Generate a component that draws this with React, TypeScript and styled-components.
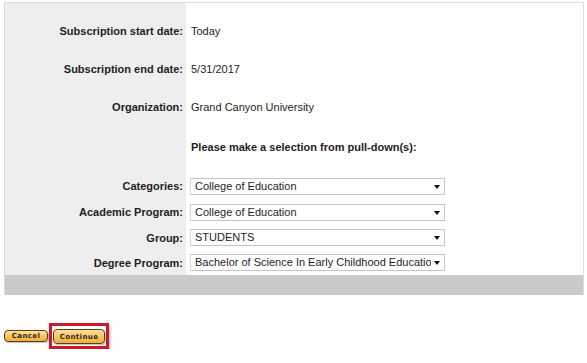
import styled, { createGlobalStyle } from "styled-components"

const Global = createGlobalStyle`
  body {
    margin: 0;
    background: #fff;
    font-family: "Liberation Sans", Arial, sans-serif;
  }
`

const Page = styled.div`
  padding: 2px 3px 0 4px;
`

const Box = styled.div`
  width: 580px;
  box-sizing: border-box;
  border: 1px solid #dcdcdc;
  border-bottom: none;
  background: linear-gradient(to right, #eeeeee 181px, #ffffff 181px);
`

const Body = styled.div`
  padding-top: 9px;
`

const Row = styled.div<{ $h: number }>`
  display: flex;
  align-items: center;
  height: ${(p) => p.$h}px;
`

const Label = styled.div`
  width: 181px;
  box-sizing: border-box;
  padding-right: 3px;
  text-align: right;
  font-size: 11px;
  font-weight: bold;
  color: #1e1e1e;
  white-space: nowrap;
`

const Value = styled.div<{ $bold?: boolean }>`
  padding-left: 5px;
  font-size: 11px;
  font-weight: ${(p) => (p.$bold ? "bold" : "normal")};
  color: #1e1e1e;
  white-space: nowrap;
`

const SelectCell = styled.div`
  padding-left: 4px;
`

const Select = styled.div`
  position: relative;
  width: 255px;
  height: 17px;
  box-sizing: border-box;
  border: 1px solid #c4c4c4;
  border-left-color: #d8d8d8;
  background: #fff;
  font-size: 11px;
  color: #1e1e1e;
  line-height: 15px;
  padding-left: 4px;
`

const SelectText = styled.div`
  width: 236px;
  overflow: hidden;
  white-space: nowrap;
`

const Caret = styled.span`
  position: absolute;
  right: 4px;
  top: 6px;
  width: 0;
  height: 0;
  border-left: 3.5px solid transparent;
  border-right: 3.5px solid transparent;
  border-top: 4px solid #111;
`

const Spacer = styled.div<{ $h: number }>`
  height: ${(p) => p.$h}px;
`

const BottomBar = styled.div`
  height: 20px;
  background: #cacaca;
`

const Footer = styled.div`
  display: flex;
  align-items: center;
  margin-top: 28px;
`

const Btn = styled.div<{ $w: number; $h: number }>`
  width: ${(p) => p.$w}px;
  height: ${(p) => p.$h}px;
  box-sizing: border-box;
  display: flex;
  align-items: center;
  justify-content: center;
  border: 1px solid #5a3e16;
  border-radius: 4px;
  background: linear-gradient(#ffe0a0, #fbc25a 55%, #f2ad3e);
  box-shadow: 1px 1px 1px rgba(0, 0, 0, 0.25);
  font-family: "DejaVu Sans", Verdana, sans-serif;
  font-size: 7px;
  font-weight: bold;
  letter-spacing: 0.4px;
  color: #2a2a2a;
`

const Highlight = styled.div`
  margin-left: 1px;
  padding: 3px 1px 2px 1px;
  border: 3px solid #cc1a2c;
  box-shadow: 1px 2px 3px rgba(0, 0, 0, 0.35);
`

const rows = [
  { label: "Subscription start date:", value: "Today" },
  { label: "Subscription end date:", value: "5/31/2017" },
  { label: "Organization:", value: "Grand Canyon University" },
]

const selects = [
  { label: "Categories:", value: "College of Education", h: 26 },
  { label: "Academic Program:", value: "College of Education", h: 26 },
  { label: "Group:", value: "STUDENTS", h: 25 },
  { label: "Degree Program:", value: "Bachelor of Science In Early Childhood Education", h: 25 },
]

export default function App() {
  return (
    <Page>
      <Global />
      <Box>
        <Body>
          {rows.map((r) => (
            <Row key={r.label} $h={38}>
              <Label>{r.label}</Label>
              <Value>{r.value}</Value>
            </Row>
          ))}
          <Row $h={42}>
            <Label />
            <Value $bold>Please make a selection from pull-down(s):</Value>
          </Row>
          <Spacer $h={5} />
          {selects.map((s) => (
            <Row key={s.label} $h={s.h}>
              <Label>{s.label}</Label>
              <SelectCell>
                <Select>
                  <SelectText>{s.value}</SelectText>
                  <Caret />
                </Select>
              </SelectCell>
            </Row>
          ))}
        </Body>
        <BottomBar />
      </Box>
      <Footer>
        <Btn $w={44} $h={12}>Cancel</Btn>
        <Highlight>
          <Btn $w={52} $h={15}>Continue</Btn>
        </Highlight>
      </Footer>
    </Page>
  )
}
